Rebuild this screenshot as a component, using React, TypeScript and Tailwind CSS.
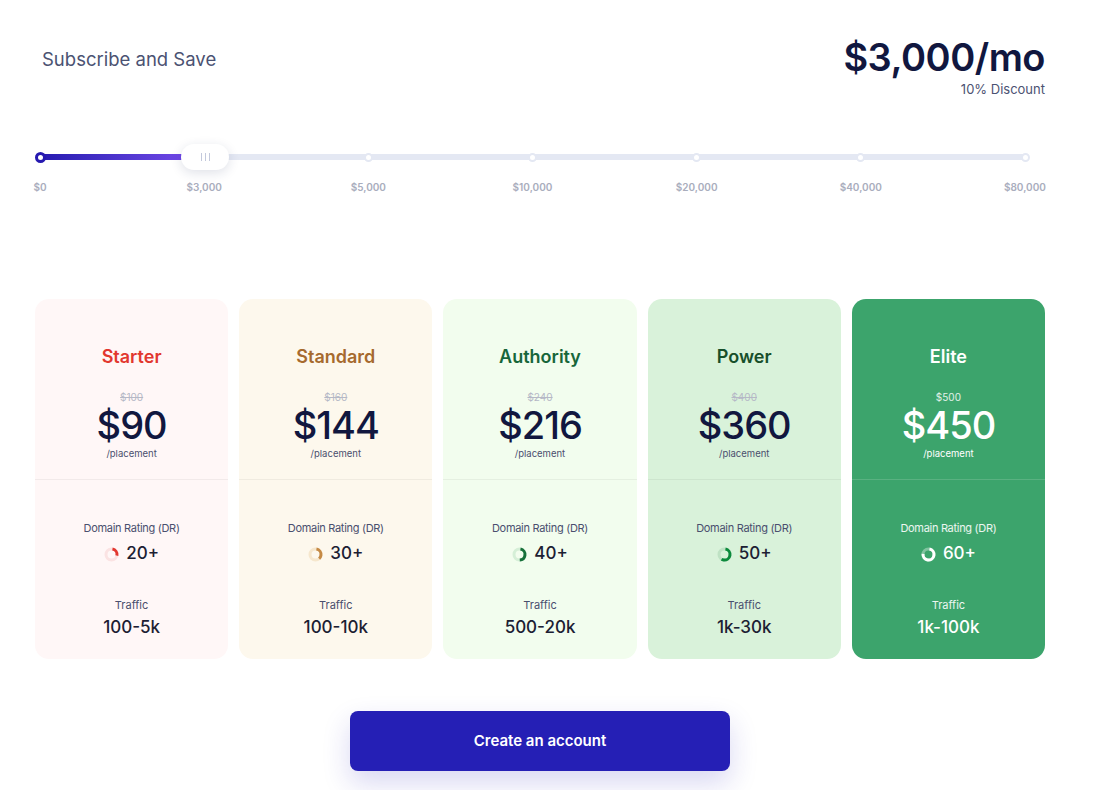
const ticks = ["$0", "$3,000", "$5,000", "$10,000", "$20,000", "$40,000", "$80,000"];

type Plan = {
  name: string;
  was: string;
  price: string;
  dr: number;
  traffic: string;
  bg: string;
  title: string;
  ring: string;
  arc: string;
  dark?: boolean;
};

const plans: Plan[] = [
  { name: "Starter", was: "$100", price: "$90", dr: 20, traffic: "100-5k", bg: "bg-[#fff7f7]", title: "text-[#e2372f]", ring: "#fbe3e3", arc: "#e2372f" },
  { name: "Standard", was: "$160", price: "$144", dr: 30, traffic: "100-10k", bg: "bg-[#fdf8ed]", title: "text-[#a66a2e]", ring: "#f6e7cd", arc: "#c58a45" },
  { name: "Authority", was: "$240", price: "$216", dr: 40, traffic: "500-20k", bg: "bg-[#f2fdee]", title: "text-[#17663a]", ring: "#d5efd7", arc: "#17703a" },
  { name: "Power", was: "$400", price: "$360", dr: 50, traffic: "1k-30k", bg: "bg-[#d9f2da]", title: "text-[#174f2a]", ring: "#bfe2c4", arc: "#0c8a3c" },
  { name: "Elite", was: "$500", price: "$450", dr: 60, traffic: "1k-100k", bg: "bg-[#3ca46c]", title: "text-white", ring: "rgba(255,255,255,0.35)", arc: "#ffffff", dark: true },
];

function Donut({ pct, ring, arc }: { pct: number; ring: string; arc: string }) {
  const c = 2 * Math.PI * 5.5;
  return (
    <svg width="15" height="15" viewBox="0 0 15 15">
      <circle cx="7.5" cy="7.5" r="5.5" fill="none" stroke={ring} strokeWidth="3" />
      <circle
        cx="7.5"
        cy="7.5"
        r="5.5"
        fill="none"
        stroke={arc}
        strokeWidth="3"
        strokeDasharray={`${(c * pct) / 100} ${c}`}
        transform="rotate(-80 7.5 7.5)"
      />
    </svg>
  );
}

function PlanCard({ p }: { p: Plan }) {
  const muted = p.dark ? "text-white/90" : "text-[#4a4f6e]";
  const strong = p.dark ? "text-white" : "text-[#1c2033]";
  return (
    <div className={`flex-1 h-[360px] rounded-[14px] ${p.bg} flex flex-col`}>
      <div className="h-[180px] flex flex-col items-center pt-[46px]">
        <div className={`text-[18px] leading-[24px] font-semibold ${p.title}`}>{p.name}</div>
        <div className={`mt-[21px] text-[10px] leading-[14px] ${p.dark ? "text-white/85" : "line-through text-[#b5b8c6]"}`}>{p.was}</div>
        <div className={`mt-[2px] text-[38px] leading-[38px] font-medium tracking-[-1px] ${p.dark ? "text-white" : "text-[#11173f]"}`}>{p.price}</div>
        <div className={`mt-[4px] text-[9.5px] leading-[12px] ${p.dark ? "text-white" : "text-[#4a4f6e]"}`}>/placement</div>
      </div>
      <div className={`h-px ${p.dark ? "bg-white/15" : "bg-black/[0.05]"}`} />
      <div className="flex flex-col items-center pt-[41px]">
        <div className={`text-[11px] leading-[14px] tracking-[-0.3px] ${muted}`}>Domain Rating (DR)</div>
        <div className="mt-[7px] h-[24px] flex items-center gap-[7px]">
          <Donut pct={p.dr === 60 ? 72 : p.dr + 5} ring={p.ring} arc={p.arc} />
          <span className={`text-[17px] font-medium ${strong}`}>{p.dr}+</span>
        </div>
        <div className={`mt-[32px] text-[11px] leading-[14px] ${muted}`}>Traffic</div>
        <div className={`mt-[3px] text-[17px] leading-[24px] font-medium ${strong}`}>{p.traffic}</div>
      </div>
    </div>
  );
}

export default function App() {
  return (
    <div className="min-h-[790px] bg-white font-['Inter',sans-serif]">
      <div className="w-[1010px] ml-[35px] pt-[35px]">
        <div className="flex justify-between items-start">
          <h1 className="mt-[12px] ml-[7px] text-[18.5px] leading-[24px] font-normal text-[#4b5272]">Subscribe and Save</h1>
          <div className="flex flex-col items-end">
            <div className="text-[38px] leading-[44px] font-semibold tracking-[-0.5px] text-[#11173f]">$3,000/mo</div>
            <div className="mt-px text-[13px] leading-[18px] text-[#4b5272]">10% Discount</div>
          </div>
        </div>

        <div className="mt-[46px] ml-[5px] w-[985px]">
          <div className="relative h-[26px] flex items-center">
            <div className="h-[6px] w-full rounded-full bg-[#e4e8f3]" />
            <div className="absolute left-0 top-[10px] h-[6px] w-[170px] rounded-full bg-gradient-to-r from-[#2619b0] to-[#7d4ef0]" />
            <div className="absolute left-[-5px] top-[8px] w-[11px] h-[11px] rounded-full bg-white border-[3px] border-[#2619b0]" />
            {[2, 3, 4, 5, 6].map((i) => (
              <div
                key={i}
                className="absolute top-[9px] w-[9px] h-[9px] -ml-[4.5px] rounded-full bg-white border-2 border-[#e4e8f3]"
                style={{ left: `${(i / 6) * 100}%` }}
              />
            ))}
            <div className="absolute left-[141px] top-0 w-[48px] h-[26px] rounded-full bg-white shadow-[0_3px_12px_rgba(30,40,90,0.14)] flex items-center justify-center gap-[3px]">
              <span className="w-px h-[8px] bg-[#c3c9dc]" />
              <span className="w-px h-[8px] bg-[#c3c9dc]" />
              <span className="w-px h-[8px] bg-[#c3c9dc]" />
            </div>
          </div>
          <div className="mt-[10px] flex justify-between">
            {ticks.map((t) => (
              <div key={t} className="w-0 flex justify-center">
                <span className="whitespace-nowrap text-[10px] leading-[14px] font-semibold text-[#a9adbd]">{t}</span>
              </div>
            ))}
          </div>
        </div>

        <div className="mt-[105px] flex gap-[11px]">
          {plans.map((p) => (
            <PlanCard key={p.name} p={p} />
          ))}
        </div>

        <div className="mt-[52px] flex justify-center">
          <button className="w-[380px] h-[60px] rounded-[8px] bg-[#251fb5] text-white text-[15px] font-semibold shadow-[0_12px_28px_rgba(37,31,181,0.18)]">
            Create an account
          </button>
        </div>
      </div>
    </div>
  );
}
